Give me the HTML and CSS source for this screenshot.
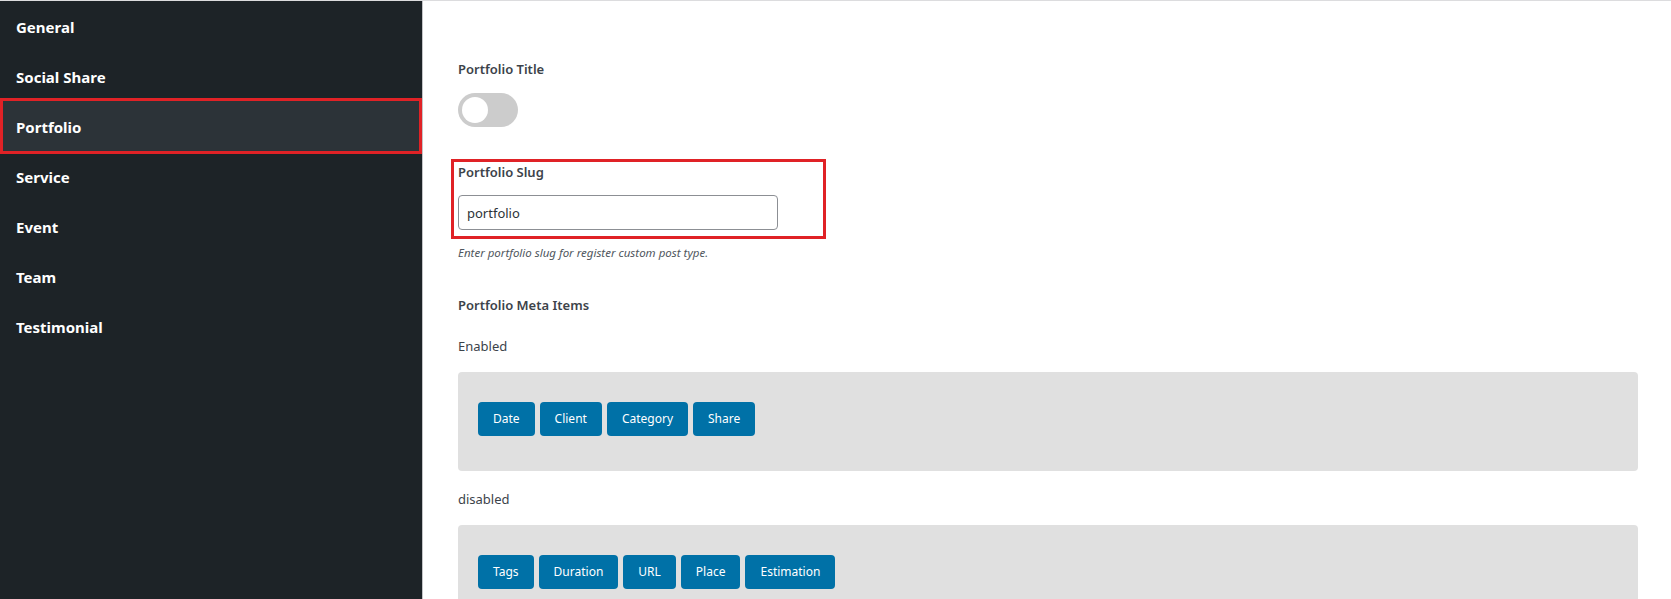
FILE: index.html
```html
<!DOCTYPE html>
<html lang="en">
<head>
    <meta charset="UTF-8">
    <meta name="viewport" content="width=device-width, initial-scale=1.0">
    <title>Theme Options - Portfolio</title>
    <link rel="stylesheet" href="styles.css">
</head>
<body>
    <div class="page">
        <nav class="sidebar">
            <a href="#" class="nav-item">General</a>
            <a href="#" class="nav-item">Social Share</a>
            <a href="#" class="nav-item active">Portfolio</a>
            <a href="#" class="nav-item">Service</a>
            <a href="#" class="nav-item">Event</a>
            <a href="#" class="nav-item">Team</a>
            <a href="#" class="nav-item">Testimonial</a>
        </nav>

        <main class="content">
            <div class="field-title">Portfolio Title</div>
            <label class="toggle">
                <input type="checkbox">
                <span class="knob"></span>
            </label>

            <div class="field highlight">
                <div class="field-title">Portfolio Slug</div>
                <input type="text" class="text-input" value="portfolio">
            </div>
            <p class="help">Enter portfolio slug for register custom post type.</p>

            <div class="field-title meta-title">Portfolio Meta Items</div>

            <div class="group-label">Enabled</div>
            <div class="sorter">
                <span class="chip">Date</span>
                <span class="chip">Client</span>
                <span class="chip">Category</span>
                <span class="chip">Share</span>
            </div>

            <div class="group-label">disabled</div>
            <div class="sorter">
                <span class="chip">Tags</span>
                <span class="chip">Duration</span>
                <span class="chip">URL</span>
                <span class="chip">Place</span>
                <span class="chip">Estimation</span>
            </div>
        </main>
    </div>
</body>
</html>
```

FILE: styles.css
```css
html, body { margin: 0; padding: 0; }
body { font-family: "Noto Sans", "Open Sans", Arial, sans-serif; font-size: 13px; color: #3c434a; background: #fff; overflow: hidden; }

.page { display: flex; min-height: 100vh; border-top: 1px solid #dcdcde; }

.sidebar { width: 422px; flex-shrink: 0; background: #1d2327; border-right: 1px solid #c3c4c7; }
.nav-item { position: relative; display: block; height: 50px; line-height: 50px; padding: 1px 0 0 16px; box-sizing: border-box; color: #fff; font-weight: 700; font-size: 15px; text-decoration: none; }
.nav-item.active { background: #2c3338; }
.nav-item.active::after { content: ""; position: absolute; top: -3px; bottom: -3px; left: 0; right: 0; border: 3px solid #e02226; }

.content { flex: 1; padding: 58px 33px 0 35px; }

.field-title { font-weight: 600; line-height: 20px; color: #3c434a; }

.toggle { position: relative; display: block; width: 60px; height: 34px; margin-top: 14px; border-radius: 17px; background: #ccc; cursor: pointer; }
.toggle input { display: none; }
.knob { position: absolute; top: 4px; left: 4px; width: 26px; height: 26px; border-radius: 50%; background: #fff; }

.field { margin-top: 32px; }
.field.highlight { width: 365px; margin-left: -7px; padding: 0 0 6px 4px; border: 3px solid #e02226; }
.text-input { display: block; width: 320px; height: 35px; margin-top: 13px; padding: 0 8px; box-sizing: border-box; border: 1px solid #8c8f94; border-radius: 4px; font-family: inherit; font-size: 13px; color: #2c3338; }

.help { margin: 6px 0 0; font-size: 11.5px; line-height: 16px; font-style: italic; color: #50575e; }

.meta-title { margin-top: 34px; }
.group-label { margin-top: 21px; line-height: 20px; }
.sorter + .group-label { margin-top: 18px; }

.sorter { display: flex; gap: 5px; margin-top: 16px; padding: 30px 20px 35px; min-height: 34px; border-radius: 4px; background: #e0e0e0; }
.chip { height: 34px; line-height: 34px; padding: 0 15px; border-radius: 4px; background: #0071a7; color: #fff; font-size: 12px; }
```
